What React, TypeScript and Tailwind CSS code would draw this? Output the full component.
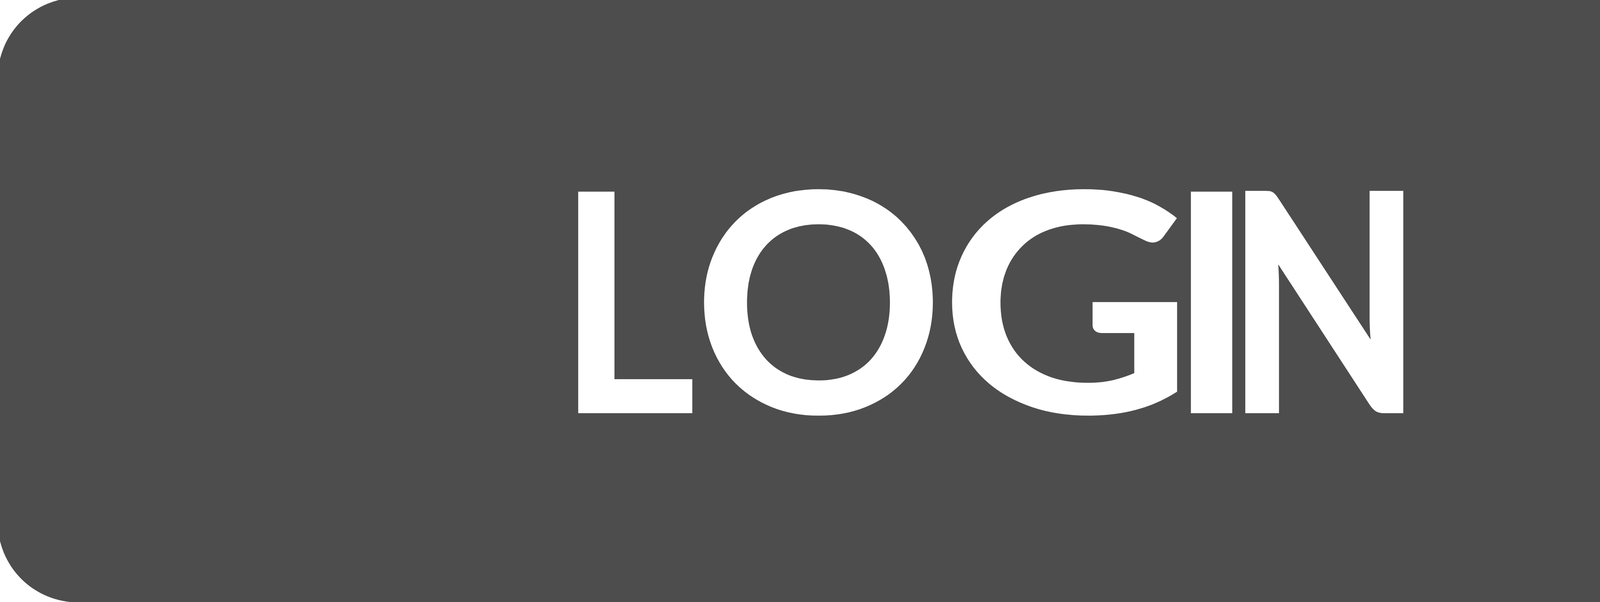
export default function App() {
  return (
    <div className="h-[1540px] w-full overflow-hidden bg-white">
      <button
        type="button"
        className="-m-[6px] flex h-[1547px] w-[5071px] items-center justify-center rounded-[206px] bg-[#4d4d4d]"
      >
        <span className="flex items-baseline pb-[28px] pl-[36px] font-['Lato',_'Liberation_Sans',_sans-serif] text-[784px] font-bold leading-none text-white">
          <span className="inline-block scale-x-[0.88] tracking-[-30px]">L</span>
          <span className="inline-block scale-x-[1.02] tracking-[32px]">O</span>
          <span className="inline-block scale-x-[1.15] tracking-[-28px]">G</span>
          <span className="tracking-[-131px]">I</span>
          <span className="inline-block scale-x-[0.83] font-black">N</span>
        </span>
      </button>
    </div>
  );
}
